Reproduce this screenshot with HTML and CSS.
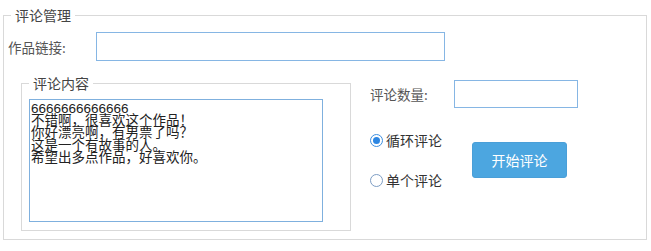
FILE: index.html
```html
<!DOCTYPE html>
<html lang="zh-CN">
<head>
<meta charset="utf-8">
<title>评论管理</title>
<link rel="stylesheet" href="styles.css">
</head>
<body>
<fieldset class="group outer">
  <legend class="group-title outer-title">评论管理</legend>
  <div class="link-row">
    <label class="field-label link-label">作品链接:</label>
    <input class="text-input link-input" type="text">
  </div>
  <div class="main-row">
    <fieldset class="group inner">
      <legend class="group-title inner-title">评论内容</legend>
      <textarea class="comments">6666666666666
不错啊，很喜欢这个作品！
你好漂亮啊，有男票了吗？
这是一个有故事的人。
希望出多点作品，好喜欢你。</textarea>
    </fieldset>
    <div class="side">
      <div class="count-row">
        <label class="field-label count-label">评论数量:</label>
        <input class="text-input count-input" type="text">
      </div>
      <div class="action-row">
        <div class="radios">
          <div class="radio-row"><span class="radio checked"></span><span class="radio-text">循环评论</span></div>
          <div class="radio-row"><span class="radio"></span><span class="radio-text">单个评论</span></div>
        </div>
        <button class="start-btn" type="button">开始评论</button>
      </div>
    </div>
  </div>
</fieldset>
</body>
</html>
```

FILE: styles.css
```css
html, body {
  margin: 0;
  padding: 0;
  background: #ffffff;
}
body {
  width: 651px;
  height: 251px;
  padding: 7px 0 0 3px;
  box-sizing: border-box;
  font-family: "Noto Sans CJK SC", "Liberation Sans", sans-serif;
  font-size: 13px;
  color: #444;
}
.group {
  margin: 0;
  border: 1px solid #d9d9d9;
  box-sizing: border-box;
  min-width: 0;
}
.outer {
  width: 644px;
  padding: 0 0 8px 0;
}
.group-title {
  padding: 0 4px;
  font-size: 14px;
  line-height: 16px;
  height: 16px;
  color: #444;
}
.outer-title {
  margin-left: 7px;
}
.inner-title {
  margin-left: 0;
}
.link-row {
  display: flex;
  align-items: center;
  margin-top: 9px;
}
.field-label {
  font-size: 13.5px;
  line-height: 16px;
  color: #555;
}
.link-label {
  width: 88px;
  padding-left: 4px;
}
.text-input {
  box-sizing: border-box;
  margin: 0;
  border: 1px solid #86b6e4;
  background: #fff;
  outline: none;
  padding: 0 3px;
}
.link-input {
  width: 349px;
  height: 29px;
}
.main-row {
  display: flex;
  align-items: flex-start;
  margin-top: 14px;
}
.inner {
  width: 330px;
  margin-left: 17px;
  padding: 0 0 8px 7px;
}
.comments {
  display: block;
  box-sizing: border-box;
  width: 294px;
  height: 123px;
  margin: 8px 0 0 0;
  border: 1px solid #7fb0de;
  padding: 3px 0 0 1px;
  resize: none;
  overflow: hidden;
  font-family: "Liberation Sans", "Noto Sans CJK SC", sans-serif;
  font-size: 13.5px;
  line-height: 12.2px;
  color: #222;
  outline: none;
}
.side {
  margin-left: 19px;
  padding-top: 5px;
}
.count-row {
  display: flex;
  align-items: center;
}
.count-label {
  width: 84px;
}
.count-input {
  width: 124px;
  height: 28px;
}
.action-row {
  display: flex;
  align-items: center;
  margin-top: 22px;
}
.radios {
  display: flex;
  flex-direction: column;
  gap: 20px;
}
.radio-row {
  display: flex;
  align-items: center;
  height: 20px;
}
.radio {
  width: 13px;
  height: 13px;
  box-sizing: border-box;
  border: 1px solid #7d9dc4;
  border-radius: 50%;
  background: #fff;
  position: relative;
  margin-right: 3px;
}
.radio.checked {
  border-color: #3d8fe0;
}
.radio.checked::after {
  content: "";
  position: absolute;
  left: 2px;
  top: 2px;
  width: 7px;
  height: 7px;
  border-radius: 50%;
  background: #2c86e2;
}
.radio-text {
  font-size: 14px;
  line-height: 16px;
  color: #333;
}
.start-btn {
  margin-left: 30px;
  width: 95px;
  height: 36px;
  border: 1px solid #4a9fd8;
  border-radius: 3px;
  background: #4ca6e0;
  color: #ffffff;
  font-family: "Noto Sans CJK SC", sans-serif;
  font-size: 14px;
  padding: 0;
}
```
